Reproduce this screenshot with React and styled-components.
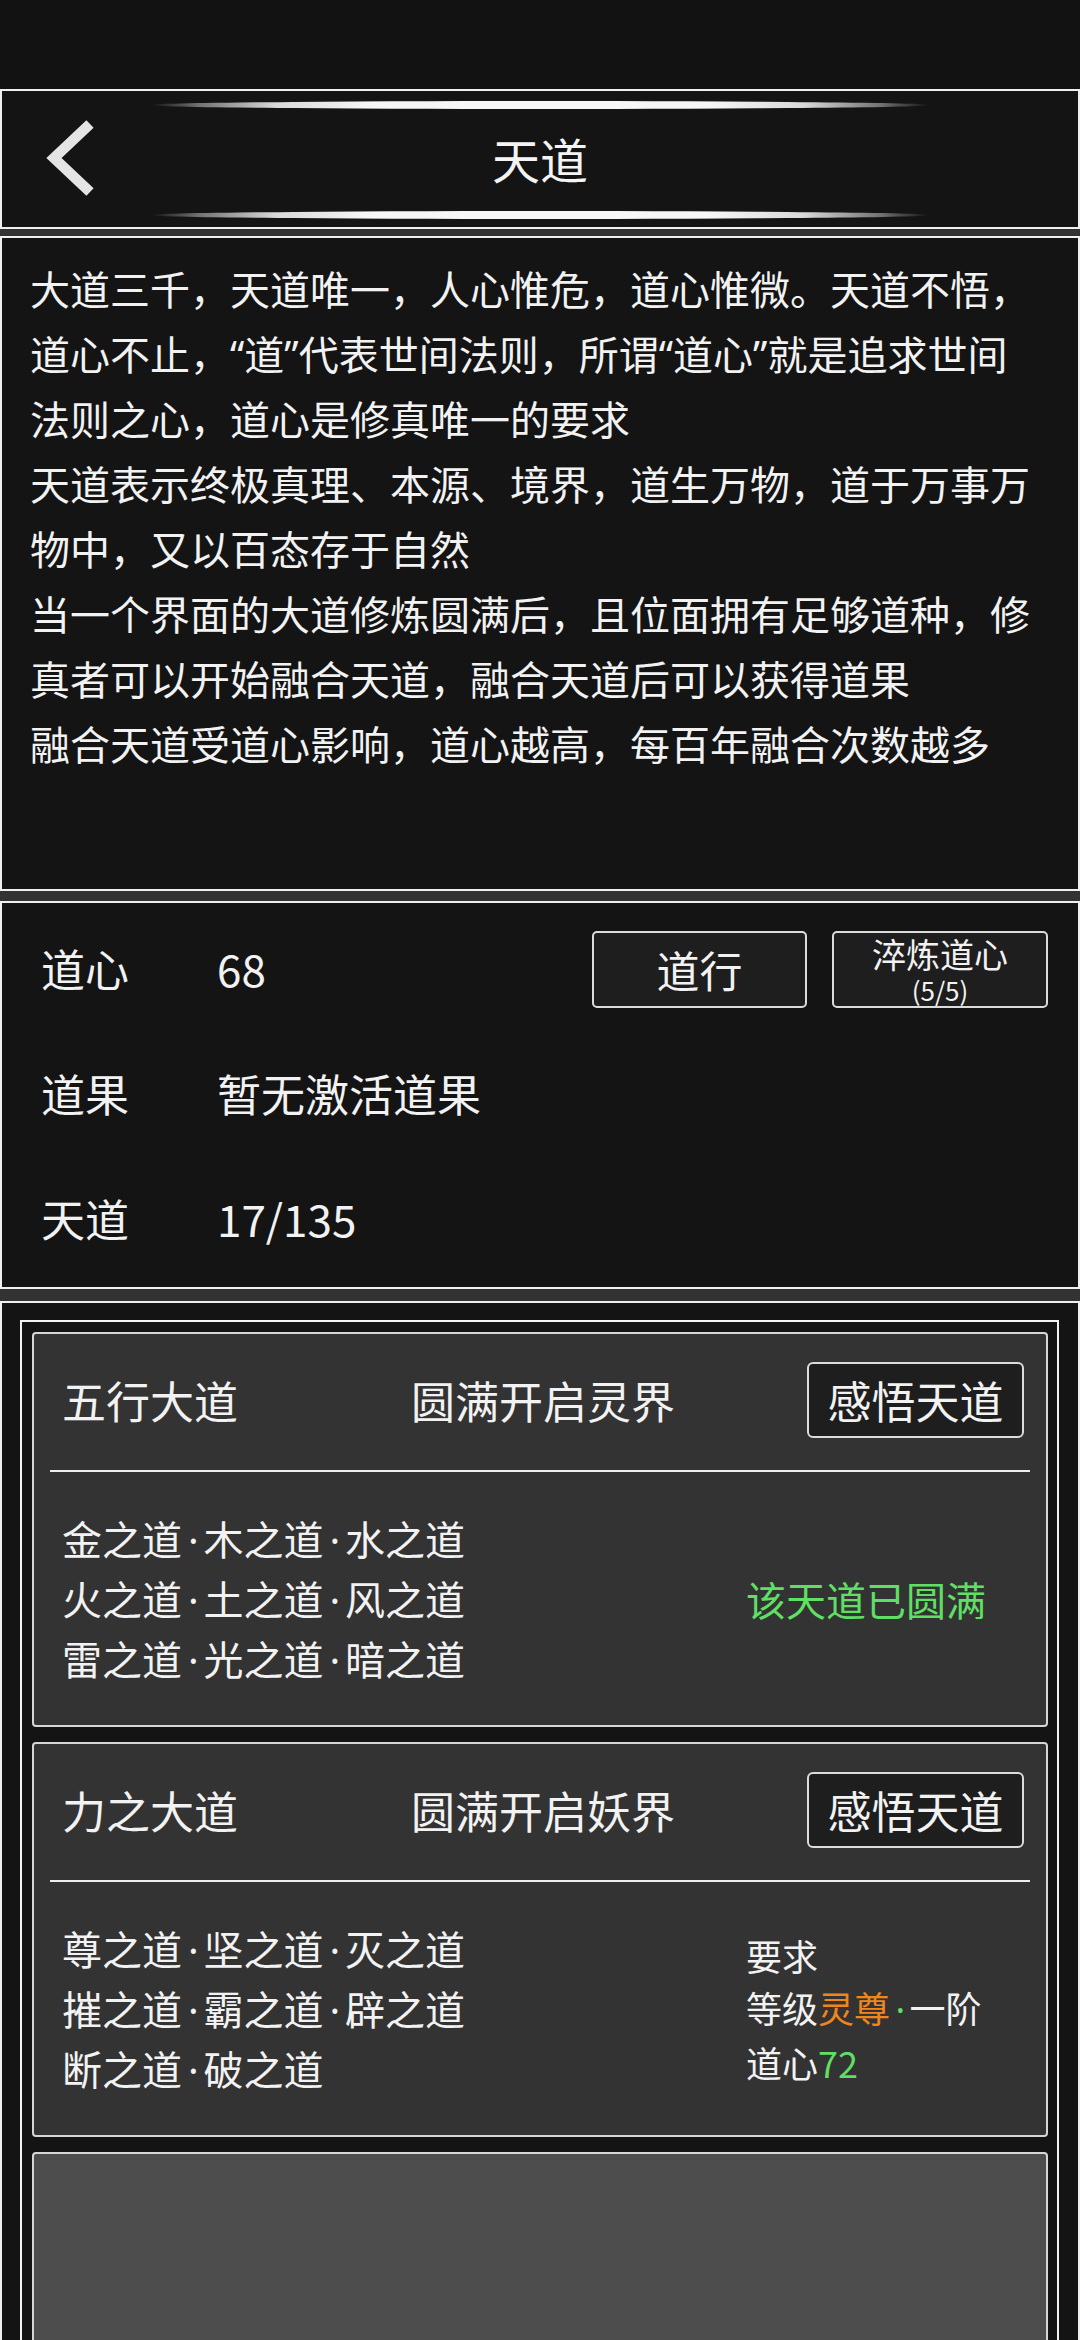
import React from 'react';
import styled, { createGlobalStyle } from 'styled-components';

const GlobalStyle = createGlobalStyle`
  html, body {
    margin: 0;
    padding: 0;
    background: #131313;
  }
  body {
    font-family: 'Noto Sans CJK SC', 'Noto Sans', sans-serif;
    color: #f2f2f2;
  }
  * {
    box-sizing: border-box;
  }
`;

const Screen = styled.div`
  width: 1080px;
  height: 2340px;
  overflow: hidden;
  display: flex;
  flex-direction: column;
  background: #333333;
`;

const StatusBar = styled.div`
  flex: none;
  height: 89px;
  background: #121212;
`;

const Panel = styled.section`
  flex: none;
  background: #141414;
  border: 2px solid #f0f0f0;
  margin-top: ${(p) => p.$gap || 0}px;
  height: ${(p) => (p.$h ? `${p.$h}px` : 'auto')};
`;

const HeaderPanel = styled(Panel)`
  display: flex;
  flex-direction: column;
  align-items: center;
  padding: 10px 0 8px;
`;

const GlowLine = styled.div`
  flex: none;
  width: 778px;
  height: 8px;
  border-radius: 50%;
  background: linear-gradient(
    90deg,
    rgba(120, 120, 120, 0) 0%,
    rgba(150, 150, 150, 0.7) 6%,
    #d8d8d8 16%,
    #f6f6f6 28%,
    #f6f6f6 72%,
    #d8d8d8 84%,
    rgba(150, 150, 150, 0.7) 94%,
    rgba(120, 120, 120, 0) 100%
  );
`;

const HeaderRow = styled.div`
  flex: 1;
  width: 100%;
  display: grid;
  grid-template-columns: 1fr auto 1fr;
  align-items: center;
  padding-bottom: 4px;
`;

const BackButton = styled.button`
  justify-self: start;
  margin-left: 38px;
  padding: 0;
  border: none;
  background: none;
  display: flex;
  cursor: pointer;
`;

const Title = styled.h1`
  margin: 0;
  font-size: 48px;
  font-weight: 400;
  line-height: 1;
  color: #f4f4f4;
`;

const TextPanel = styled(Panel)`
  padding: 19px 44px 20px 28px;
`;

const Para = styled.p`
  margin: 0;
  font-family: 'Noto Sans', 'Noto Sans CJK SC', sans-serif;
  font-size: 40px;
  line-height: 65px;
  color: #f2f2f2;
`;

const StatsPanel = styled(Panel)`
  padding: 2px 30px 0 39px;
`;

const StatRow = styled.div`
  height: 125px;
  display: flex;
  align-items: center;
`;

const Label = styled.span`
  width: 176px;
  font-size: 44px;
`;

const Value = styled.span`
  flex: 1;
  font-size: 44px;
`;

const Actions = styled.div`
  display: flex;
  gap: 25px;
  margin-top: 4px;
`;

const OutlineButton = styled.button`
  width: ${(p) => p.$w || 215}px;
  height: ${(p) => p.$h || 77}px;
  border: 2px solid #dcdcdc;
  border-radius: 5px;
  background: #1e1e1e;
  color: #f2f2f2;
  font-family: inherit;
  font-size: ${(p) => p.$size || 43}px;
  line-height: 1;
  padding: 0;
  display: flex;
  flex-direction: column;
  align-items: center;
  justify-content: center;
  cursor: pointer;
`;

const BtnMain = styled.span`
  font-size: 34px;
  line-height: 36px;
`;

const BtnSub = styled.span`
  font-size: 26px;
  line-height: 26px;
  margin-top: 5px;
`;

const BottomPanel = styled(Panel)`
  flex: 1;
  border-bottom: none;
  padding: 17px 19px 21px 18px;
  display: flex;
`;

const Frame = styled.div`
  flex: 1;
  border: 2px solid #f4f4f4;
  padding: 10px 9px 0 10px;
  overflow: hidden;
  display: flex;
  flex-direction: column;
  gap: 15px;
`;

const Card = styled.div`
  flex: none;
  height: 395px;
  border: 2px solid #d6d6d6;
  border-radius: 4px;
  background: ${(p) => (p.$empty ? '#4d4d4d' : '#333333')};
  display: flex;
  flex-direction: column;
`;

const CardHead = styled.div`
  height: 136px;
  display: grid;
  grid-template-columns: 1fr auto 1fr;
  align-items: center;
  padding: 0 22px 5px 28px;
  font-size: 44px;
`;

const HeadButton = styled(OutlineButton)`
  justify-self: end;
  border-radius: 6px;
`;

const Divider = styled.div`
  height: 2px;
  margin: 0 16px;
  background: #eeeeee;
`;

const CardBody = styled.div`
  flex: 1;
  display: grid;
  grid-template-columns: 1fr 300px;
  align-items: center;
  padding-left: 28px;
`;

const PathList = styled.div`
  font-size: 40px;
  line-height: 59px;
`;

const Dot = styled.span`
  font-family: 'Noto Sans', sans-serif;
  margin: 0 0.12em 0 0.15em;
  color: ${(p) => p.$color || 'inherit'};
`;

const Side = styled.div`
  font-size: ${(p) => p.$size || 36}px;
  line-height: 52px;
  color: ${(p) => p.$color || '#f2f2f2'};
`;

const Tint = styled.span`
  color: ${(p) => p.$color};
`;

const GREEN = '#5fdf63';
const ORANGE = '#f0851c';

const daos = [
  {
    name: '五行大道',
    reward: '圆满开启灵界',
    paths: [
      ['金之道', '木之道', '水之道'],
      ['火之道', '土之道', '风之道'],
      ['雷之道', '光之道', '暗之道'],
    ],
    done: true,
  },
  {
    name: '力之大道',
    reward: '圆满开启妖界',
    paths: [
      ['尊之道', '坚之道', '灭之道'],
      ['摧之道', '霸之道', '辟之道'],
      ['断之道', '破之道'],
    ],
    done: false,
  },
];

function BackIcon() {
  return (
    <svg width="60" height="84" viewBox="0 0 60 84">
      <polyline
        points="50,8 14,42 50,76"
        fill="none"
        stroke="#e4e4e4"
        strokeWidth="10.5"
        strokeLinejoin="miter"
      />
    </svg>
  );
}

function PathLine({ items }) {
  return (
    <div>
      {items.map((item, i) => (
        <React.Fragment key={item}>
          {i > 0 && <Dot>·</Dot>}
          {item}
        </React.Fragment>
      ))}
    </div>
  );
}

function DaoCard({ dao }) {
  return (
    <Card>
      <CardHead>
        <span>{dao.name}</span>
        <span>{dao.reward}</span>
        <HeadButton $w={217} $h={76} $size={44}>
          感悟天道
        </HeadButton>
      </CardHead>
      <Divider />
      <CardBody>
        <PathList>
          {dao.paths.map((items) => (
            <PathLine key={items[0]} items={items} />
          ))}
        </PathList>
        {dao.done ? (
          <Side $size={40} $color={GREEN}>
            该天道已圆满
          </Side>
        ) : (
          <Side>
            <div>要求</div>
            <div>
              等级<Tint $color={ORANGE}>灵尊</Tint>
              <Dot $color={GREEN}>·</Dot>一阶
            </div>
            <div>
              道心<Tint $color={GREEN}>72</Tint>
            </div>
          </Side>
        )}
      </CardBody>
    </Card>
  );
}

export default function App() {
  return (
    <>
      <GlobalStyle />
      <Screen>
        <StatusBar />
        <HeaderPanel $h={140}>
          <GlowLine />
          <HeaderRow>
            <BackButton>
              <BackIcon />
            </BackButton>
            <Title>天道</Title>
          </HeaderRow>
          <GlowLine />
        </HeaderPanel>

        <TextPanel $gap={7} $h={655}>
          <Para>
            大道三千，天道唯一，人心惟危，道心惟微。天道不悟，道心不止，“道”代表世间法则，所谓“道心”就是追求世间法则之心，道心是修真唯一的要求
          </Para>
          <Para>天道表示终极真理、本源、境界，道生万物，道于万事万物中，又以百态存于自然</Para>
          <Para>当一个界面的大道修炼圆满后，且位面拥有足够道种，修真者可以开始融合天道，融合天道后可以获得道果</Para>
          <Para>融合天道受道心影响，道心越高，每百年融合次数越多</Para>
        </TextPanel>

        <StatsPanel $gap={10} $h={388}>
          <StatRow>
            <Label>道心</Label>
            <Value>68</Value>
            <Actions>
              <OutlineButton>道行</OutlineButton>
              <OutlineButton $w={216}>
                <BtnMain>淬炼道心</BtnMain>
                <BtnSub>(5/5)</BtnSub>
              </OutlineButton>
            </Actions>
          </StatRow>
          <StatRow>
            <Label>道果</Label>
            <Value>暂无激活道果</Value>
          </StatRow>
          <StatRow>
            <Label>天道</Label>
            <Value>17/135</Value>
          </StatRow>
        </StatsPanel>

        <BottomPanel $gap={12}>
          <Frame>
            {daos.map((dao) => (
              <DaoCard key={dao.name} dao={dao} />
            ))}
            <Card $empty />
          </Frame>
        </BottomPanel>
      </Screen>
    </>
  );
}
